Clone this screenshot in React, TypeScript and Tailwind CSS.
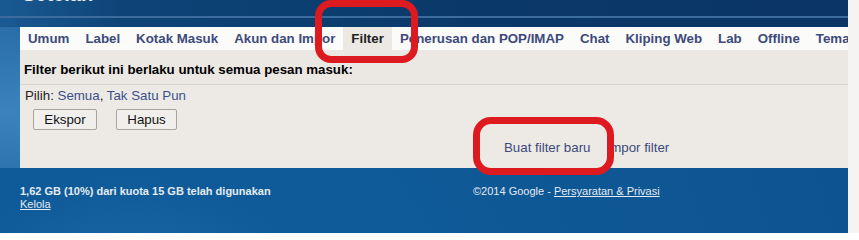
const tabs = [
  "Umum",
  "Label",
  "Kotak Masuk",
  "Akun dan Impor",
  "Filter",
  "Penerusan dan POP/IMAP",
  "Chat",
  "Kliping Web",
  "Lab",
  "Offline",
  "Tema",
];

function TabBar() {
  return (
    <div className="flex h-[23px] items-center overflow-hidden whitespace-nowrap bg-[#fbfbfa]">
      {tabs.map((t) => (
        <span
          key={t}
          className={`flex h-full items-center px-2 text-[13.3px] font-bold ${
            t === "Filter" ? "bg-[#ece9e5] text-[#222]" : "text-[#3d4a7a]"
          }`}
        >
          {t}
        </span>
      ))}
    </div>
  );
}

function FilterBody() {
  return (
    <div className="h-[118px] bg-[#edeae6] text-[13.3px] leading-4">
      <div className="h-[35px] border-b border-[#d8d4cf] bg-[#ebe8e4] pl-1 pt-3 font-bold text-black">
        Filter berikut ini berlaku untuk semua pesan masuk:
      </div>
      <div className="pl-[5px] pt-[3px] text-[#222]">
        Pilih: <span className="text-[#3c4f8c]">Semua</span>,{" "}
        <span className="text-[#3c4f8c]">Tak Satu Pun</span>
      </div>
      <div className="mt-[5px] flex gap-[19px] pl-[13px]">
        <button className="h-[21px] w-[64px] rounded-[2px] border border-[#a9a49e] bg-[#f1efec] text-[13.3px] text-[#111]">
          Ekspor
        </button>
        <button className="h-[21px] w-[61px] rounded-[2px] border border-[#a9a49e] bg-[#f1efec] text-[13.3px] text-[#111]">
          Hapus
        </button>
      </div>
      <div className="mt-[10px] flex gap-4 pl-[484px] text-[#3b4a7c]">
        <span>Buat filter baru</span>
        <span>Impor filter</span>
      </div>
    </div>
  );
}

export default function App() {
  return (
    <div
      className="relative flex h-[233px] w-[859px] overflow-hidden"
      style={{ fontFamily: '"Liberation Sans", Arial, sans-serif' }}
    >
      <div className="w-[848px] bg-[linear-gradient(180deg,#0c467c_0px,#0a3867_27px,#0b4f8a_170px,#0e5b98_233px)]">
        <div className="relative h-[27px] overflow-hidden bg-[linear-gradient(90deg,#1a5a92_0px,#0d4478_120px,#0a3868_500px,#0a3564_848px)]">
          <div className="mt-[-16px] pl-[22px] text-[20px] font-bold leading-5 text-[#e8eef5]">
            Setelan
          </div>
          <div className="absolute left-0 right-0 top-[16px] h-[2px] bg-[#3c6c9d]" />
        </div>
        <div className="flex">
          <div className="w-[20px] shrink-0 bg-[linear-gradient(180deg,#2a6ea7,#3a83bb_60%,#2d75af)]" />
          <div className="flex-1">
            <TabBar />
            <FilterBody />
          </div>
        </div>
        <div className="flex h-[65px] bg-[radial-gradient(circle_at_130px_230px,#3d7fb3_0px,#1f68a5_90px,#0f5b99_220px,#0d5290_848px)] pt-[17px] text-[11px] leading-[13px] text-[#e4ebf2]">
          <div className="w-[473px] shrink-0 pl-[20px]">
            <div className="font-bold">1,62 GB (10%) dari kuota 15 GB telah digunakan</div>
            <div className="underline">Kelola</div>
          </div>
          <div>
            ©2014 Google - <span className="underline">Persyaratan &amp; Privasi</span>
          </div>
        </div>
      </div>
      <div className="flex-1 bg-[#f6f4f2]" />

      <div className="pointer-events-none absolute left-[315px] top-[0px] h-[63px] w-[103px] rounded-[16px] border-[7px] border-[#dc1a1f]" />
      <div className="pointer-events-none absolute left-[473px] top-[117px] h-[58px] w-[141px] rounded-[18px] border-[7px] border-[#dc1a1f]" />
    </div>
  );
}
